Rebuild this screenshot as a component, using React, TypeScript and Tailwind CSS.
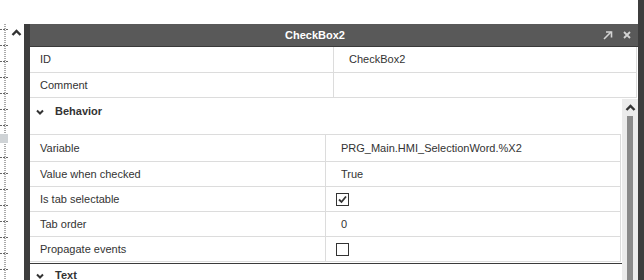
import React from 'react';

type Row = { label: string; value?: string; check?: boolean };

const behaviorRows: Row[] = [
  { label: 'Variable', value: 'PRG_Main.HMI_SelectionWord.%X2' },
  { label: 'Value when checked', value: 'True' },
  { label: 'Is tab selectable', check: true },
  { label: 'Tab order', value: '0' },
  { label: 'Propagate events', check: false },
];

function ChevronDown() {
  return (
    <svg width="8" height="6" viewBox="0 0 8 6" className="shrink-0">
      <polyline points="1,1.5 4,4.5 7,1.5" fill="none" stroke="#333" strokeWidth="2" />
    </svg>
  );
}

function ChevronUp({ color = '#333' }: { color?: string }) {
  return (
    <svg width="11" height="7" viewBox="0 0 11 7">
      <polyline points="1.5,6 5.5,2 9.5,6" fill="none" stroke={color} strokeWidth="2.4" />
    </svg>
  );
}

function Checkbox({ checked }: { checked: boolean }) {
  return (
    <svg width="13" height="13" viewBox="0 0 13 13">
      <rect x="0.5" y="0.5" width="12" height="12" fill="#fff" stroke="#333" />
      {checked && <polyline points="3,6.5 5.5,9 10,3.5" fill="none" stroke="#333" strokeWidth="1.8" />}
    </svg>
  );
}

function Ruler() {
  const ticks = Array.from({ length: 16 }, (_, i) => 29 + i * 16);
  return (
    <svg width="24" height="280" className="block">
      <line x1="5" y1="24" x2="5" y2="280" stroke="#555" strokeDasharray="1 1" />
      {ticks.map((y) => (
        <line key={y} x1="0" y1={y + 0.5} x2="9" y2={y + 0.5} stroke="#666" strokeDasharray="2 1" />
      ))}
      <rect x="0" y="134" width="8" height="9" fill="#cfd3d6" />
    </svg>
  );
}

export default function App() {
  return (
    <div className="w-[644px] h-[280px] flex bg-white overflow-hidden text-[11px] text-[#333] font-['Liberation_Sans',Arial,sans-serif]">
      <div className="w-[24px] h-full relative shrink-0">
        <Ruler />
        <div className="absolute left-[11px] top-[29px]">
          <ChevronUp />
        </div>
      </div>

      <div className="flex-1 flex flex-col pt-[24px] min-w-0">
        <div className="flex flex-1 min-h-0">
          <div className="w-[6px] bg-[#3d3d3d] shrink-0" />
          <div className="flex-1 flex flex-col min-w-0 overflow-hidden">
            {/* title bar */}
            <div className="h-[23px] shrink-0 bg-[#595959] border-b border-[#3a3a3a] flex items-center">
              <div className="flex-1 text-center font-bold text-white">CheckBox2</div>
              <div className="w-[38px] flex items-center gap-[10px] pl-[3px]">
                <svg width="10" height="9" viewBox="0 0 10 9">
                  <polyline points="1,8 8,1" fill="none" stroke="#d4d4d4" strokeWidth="1.6" />
                  <polyline points="3,1 8.5,1 8.5,6.5" fill="none" stroke="#d4d4d4" strokeWidth="1.6" />
                </svg>
                <svg width="8" height="8" viewBox="0 0 8 8">
                  <path d="M1 1 L7 7 M7 1 L1 7" stroke="#d4d4d4" strokeWidth="1.8" />
                </svg>
              </div>
            </div>

            {/* fixed rows */}
            <div className="shrink-0 mr-[1px] border-r border-[#dcdcdc]">
              <div className="flex h-[26px] border-b border-[#dcdcdc]">
                <div className="w-[303px] pl-[10px] flex items-center">ID</div>
                <div className="flex-1 border-l border-[#dcdcdc] pl-[15px] flex items-center">CheckBox2</div>
              </div>
              <div className="flex h-[25px] border-b border-[#dcdcdc]">
                <div className="w-[303px] pl-[10px] flex items-center">Comment</div>
                <div className="flex-1 border-l border-[#dcdcdc]" />
              </div>
            </div>

            {/* scrolling area */}
            <div className="flex flex-1 min-h-0 overflow-hidden">
              <div className="flex-1 flex flex-col min-w-0">
                <div className="h-[27px] shrink-0 flex items-center gap-[11px] pl-[6px] font-bold">
                  <ChevronDown />
                  <span>Behavior</span>
                </div>
                <div className="shrink-0 mt-[9px] mr-[1px] border-t border-r border-[#dcdcdc]">
                  {behaviorRows.map((r, i) => (
                    <div
                      key={r.label}
                      className={`flex border-b border-[#dcdcdc] ${i === 0 ? 'h-[27px]' : 'h-[25px]'}`}
                    >
                      <div className="w-[295px] pl-[10px] flex items-center">{r.label}</div>
                      <div className="flex-1 border-l border-[#dcdcdc] flex items-center">
                        {r.check === undefined ? (
                          <span className="pl-[15px]">{r.value}</span>
                        ) : (
                          <span className="pl-[10px] flex">
                            <Checkbox checked={r.check} />
                          </span>
                        )}
                      </div>
                    </div>
                  ))}
                </div>
                <div className="shrink-0 mt-[1px] border-t border-[#3a3a3a] h-[24px] flex items-center gap-[11px] pl-[6px] font-bold">
                  <ChevronDown />
                  <span>Text</span>
                </div>
              </div>
              <div className="w-[16px] shrink-0 mt-[1px] bg-[#ebebeb] flex flex-col items-center">
                <div className="pt-[5px] pb-[5px]">
                  <ChevronUp />
                </div>
                <div className="w-[6px] flex-1 bg-[#8a8a8a]" />
              </div>
            </div>
          </div>
        </div>
      </div>

      <div className="w-[6px] h-full bg-[#3d3d3d] shrink-0" />
    </div>
  );
}
